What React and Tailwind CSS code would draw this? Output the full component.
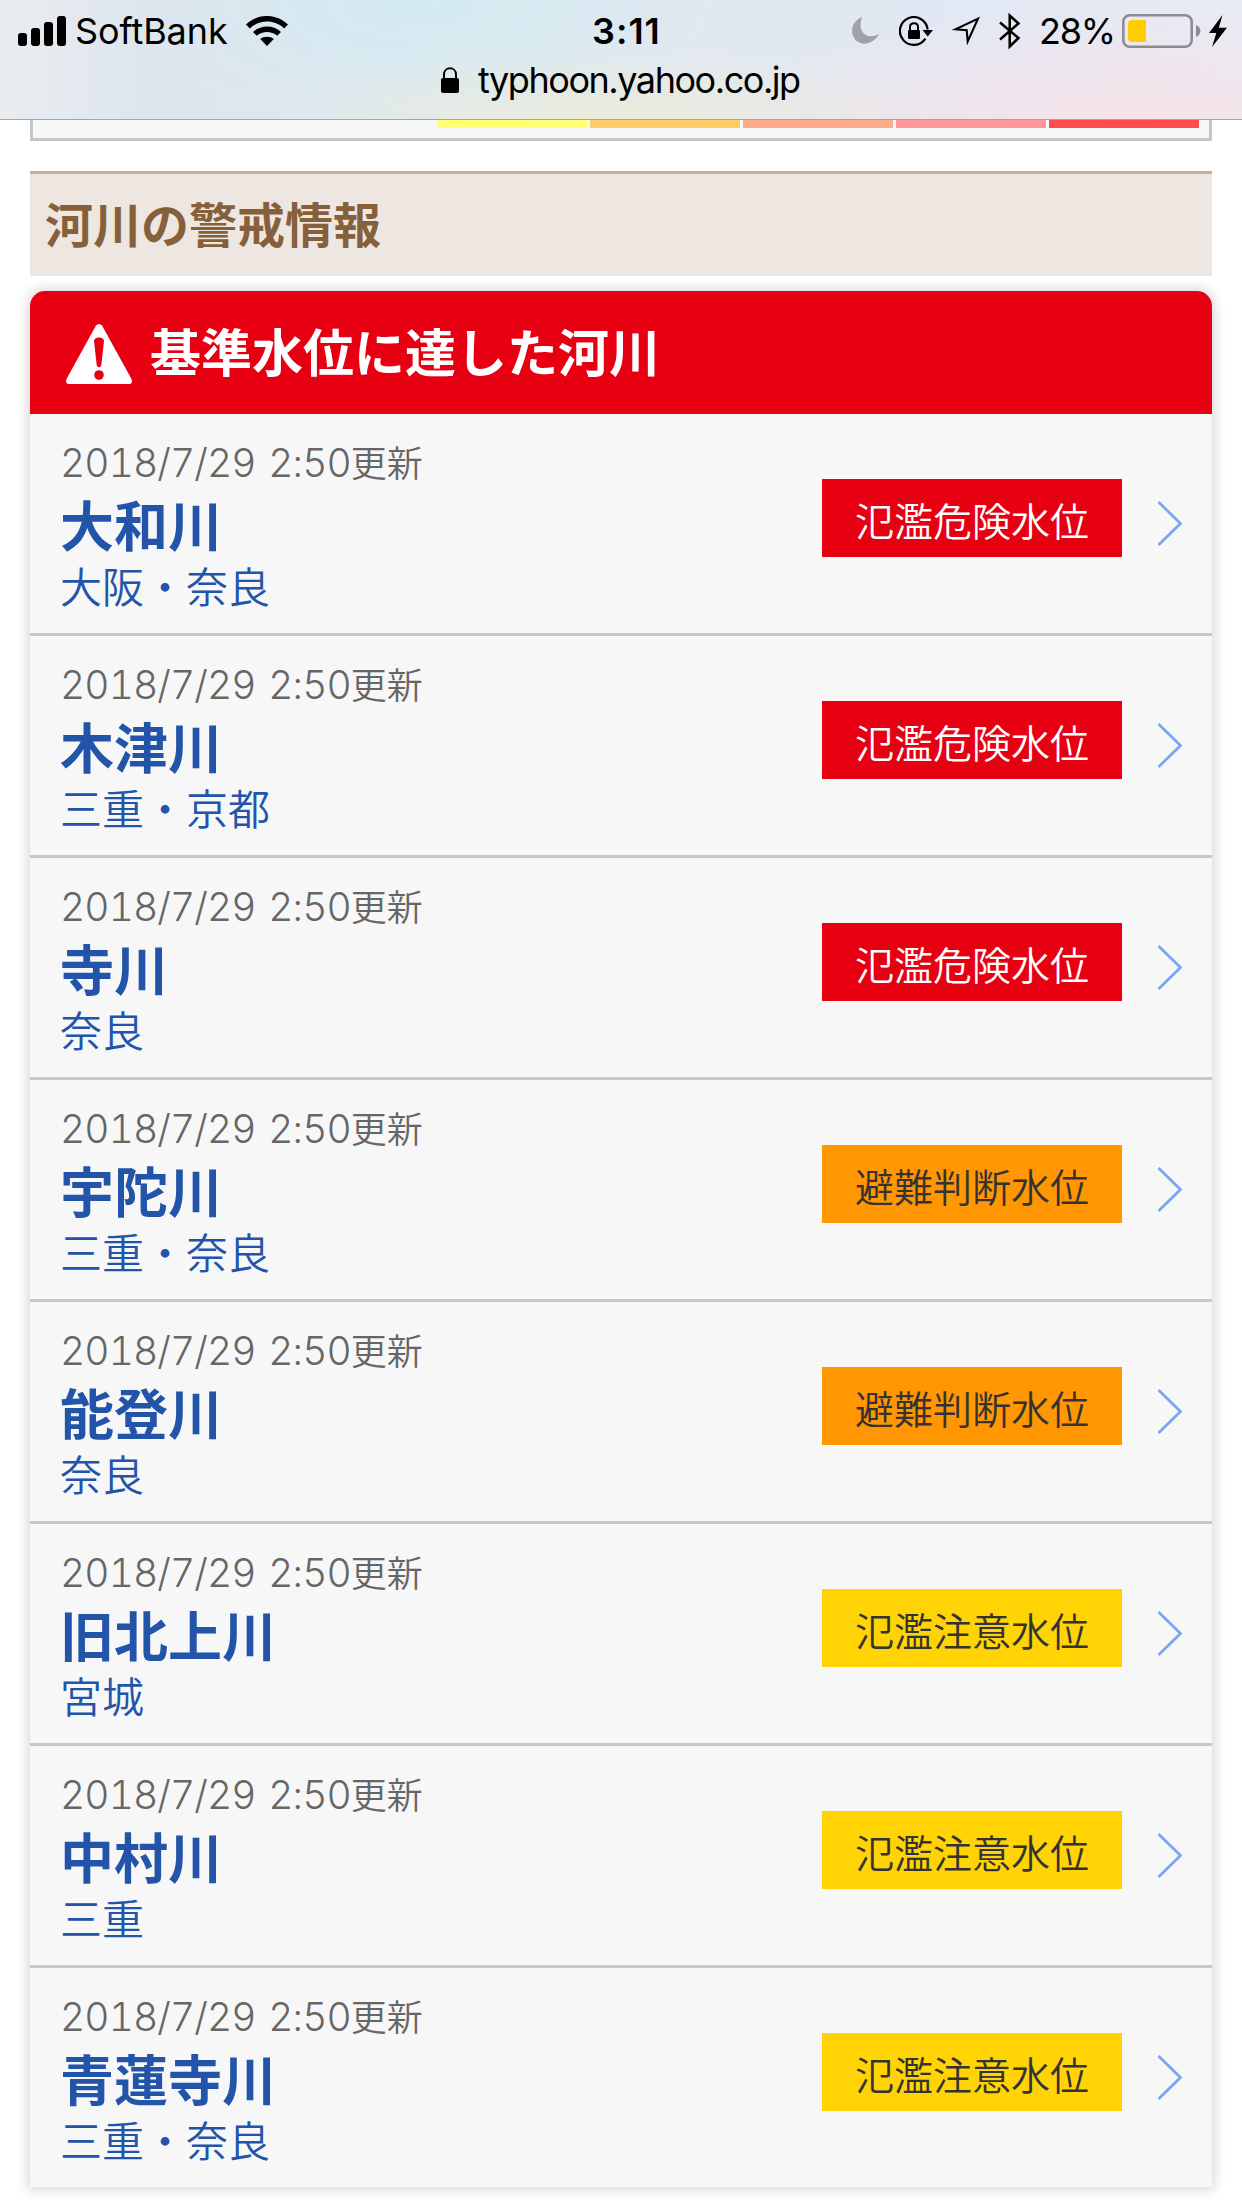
import React from 'react'

const RIVERS = [
  { name: '大和川', area: '大阪・奈良', level: 'danger' },
  { name: '木津川', area: '三重・京都', level: 'danger' },
  { name: '寺川', area: '奈良', level: 'danger' },
  { name: '宇陀川', area: '三重・奈良', level: 'evacuation' },
  { name: '能登川', area: '奈良', level: 'evacuation' },
  { name: '旧北上川', area: '宮城', level: 'caution' },
  { name: '中村川', area: '三重', level: 'caution' },
  { name: '青蓮寺川', area: '三重・奈良', level: 'caution' },
]

const LEVELS = {
  danger: { label: '氾濫危険水位', style: 'bg-[#e60012] text-white' },
  evacuation: { label: '避難判断水位', style: 'bg-[#ff9602] text-[#333]' },
  caution: { label: '氾濫注意水位', style: 'bg-[#ffd304] text-[#333]' },
}

const LEGEND = ['bg-[#ffff71]', 'bg-[#ffcc66]', 'bg-[#ffaa8c]', 'bg-[#ff9799]', 'bg-[#ff4c4c]']

const StatusBar = () => (
  <div className="flex h-[62px] items-center font-['Inter',sans-serif] text-[36px] leading-none text-black whitespace-nowrap">
    <div className="flex w-[592px] items-center pl-[18px]">
      <svg width="48" height="30" viewBox="0 0 48 30" className="shrink-0">
        <rect x="0" y="17" width="9" height="13" rx="3" />
        <rect x="13" y="12" width="9" height="18" rx="3" />
        <rect x="26" y="6" width="9" height="24" rx="3" />
        <rect x="39" y="0" width="9" height="30" rx="3" />
      </svg>
      <span className="ml-[9px] w-[171px] tracking-[-0.1px]">SoftBank</span>
      <svg width="42" height="30" viewBox="0 0 42 30" className="shrink-0">
        <path d="M0 8.6C12-2.9 30-2.9 42 8.6L38.2 12.4C28.5 3.3 13.5 3.3 3.8 12.4Z" />
        <path d="M7 15.9C15 8.7 27 8.7 35 15.9L31.2 19.7C25.4 14.7 16.6 14.7 10.8 19.7Z" />
        <path d="M14.2 23.1C18 20 24 20 27.8 23.1L21 30Z" />
      </svg>
    </div>
    <span className="w-[260px] font-semibold tracking-[1px]">3:11</span>
    <svg width="28" height="28" viewBox="0 0 28 28" className="shrink-0">
      <path d="M10 0C2.5 3-1.2 10 .4 17.1C3.1 28.5 18.5 31.2 27.5 16.8C19 22.5 4 19 10 0Z" fill="#9ea2a9" />
    </svg>
    <svg width="34" height="30" viewBox="0 0 34 30" className="ml-[19px] shrink-0">
      <path d="M26.4 22.6A13.9 13.9 0 1 1 28.6 13.5" fill="none" stroke="#000" strokeWidth="2.2" />
      <path d="M23.5 14H34L28.7 20.5Z" />
      <rect x="9" y="14" width="12" height="9" rx="1.2" />
      <path d="M11 15V11C11 6 19 6 19 11V15" fill="none" stroke="#000" strokeWidth="2" />
    </svg>
    <svg width="30" height="30" viewBox="0 0 30 30" className="ml-[18px] shrink-0">
      <path d="M27 2.6L4.5 13.3L15.7 14.3L16.7 25.5Z" fill="none" stroke="#000" strokeWidth="2.1" />
    </svg>
    <svg width="22" height="38" viewBox="0 0 22 38" className="ml-[18px] shrink-0">
      <path d="M1 10.5L19.5 26L10.7 34.5V3.5L19.5 11.5L1 27.5" fill="none" stroke="#000" strokeWidth="2.5" />
    </svg>
    <span className="ml-[18px] w-[83px] tracking-[-1.3px]">28%</span>
    <svg width="80" height="34" viewBox="0 0 80 34" className="shrink-0">
      <rect x="1.3" y="1.3" width="68.4" height="31.4" rx="6.5" fill="none" stroke="#8c8b92" strokeWidth="2.6" />
      <path d="M10 6H24V28H10Q6 28 6 24V10Q6 6 10 6Z" fill="#ffcc00" />
      <path d="M74 11Q78.5 13.5 78.5 17Q78.5 20.5 74 23Z" fill="#8c8b92" />
    </svg>
    <svg width="18" height="32" viewBox="0 0 18 32" className="ml-[7px] shrink-0">
      <path d="M13.5 0L0 18H7.3L3 32L18 12.8H9.8Z" />
    </svg>
  </div>
)

const AddressBar = () => (
  <div className="flex h-[57px] items-start pl-[441px] font-['Inter',sans-serif] text-[36px] leading-[37px] text-black">
    <svg width="18" height="26" viewBox="0 0 18 26" className="mt-[5px] shrink-0">
      <rect x="0" y="11" width="18" height="15" rx="2" />
      <path d="M3 12V7.5C3-.7 15-.7 15 7.5V12" fill="none" stroke="#000" strokeWidth="2" />
    </svg>
    <span className="ml-[19px] whitespace-nowrap tracking-[-1.45px]">typhoon.yahoo.co.jp</span>
  </div>
)

const RiverRow = ({ river }) => {
  const level = LEVELS[river.level]
  return (
    <li className="flex h-[222px] items-center border-b-[3px] border-[#c8c8c8] px-[30px] last:h-[219px] last:border-b-0">
      <div className="grow self-start pt-5 whitespace-nowrap">
        <p className="h-[54px] text-[36px] leading-[54px] font-[350] text-[#666]">
          <span className="font-['Inter',sans-serif] text-[39px] tracking-[-0.9px] [word-spacing:3px] tabular-nums">2018/7/29 2:50</span>更新
        </p>
        <p className="h-[71px] text-[54px] leading-[71px] font-bold text-[#2255aa]">{river.name}</p>
        <p className="h-[52px] text-[42px] leading-[52px] font-[350] text-[#2255aa]">{river.area}</p>
      </div>
      <span className={`mb-[11px] h-[78px] w-[300px] text-center text-[39px] leading-[80px] font-[350] ${level.style}`}>
        {level.label}
      </span>
      <svg width="24" height="45" viewBox="0 0 24 45" className="ml-9 shrink-0">
        <path d="M.5 1L22.5 22.5L.5 44" fill="none" stroke="#7aa5f0" strokeWidth="2.7" />
      </svg>
    </li>
  )
}

const App = () => {
  return (
    <div className="h-[2208px] w-[1242px] overflow-hidden bg-white font-['Noto_Sans_CJK_JP',sans-serif]">
      {/* Browser header */}
      <header className="h-[120px] border-b border-[#a5a6a8] bg-[radial-gradient(ellipse_420px_110px_at_1130px_120px,#f6e2e8,transparent),radial-gradient(ellipse_360px_80px_at_620px_125px,#ebecda,transparent),radial-gradient(ellipse_300px_130px_at_420px_0px,#d2ebf1,transparent),linear-gradient(to_right,#e9edf0,#dee5ee_12%,#e1e8f0_35%,#e1e8f3_75%,#e8eaf4)]">
        <StatusBar />
        <AddressBar />
      </header>

      <main className="px-[30px]">
        {/* Legend strip */}
        <div className="flex h-[21px] items-start justify-end gap-[3px] border-x-[3px] border-b-[3px] border-[#c5c5c5] bg-[#f7f7f7] pr-[10px]">
          {LEGEND.map((color) => (
            <div key={color} className={`h-2 w-[150px] ${color}`} />
          ))}
        </div>

        <h2 className="mt-[30px] h-[105px] border-t-[3px] border-[#c2b0a0] bg-[#eee6e0] pl-[15px] text-[48px] leading-[97px] font-bold text-[#85603a]">
          河川の警戒情報
        </h2>

        {/* River list */}
        <section className="mt-[15px] rounded-t-[15px] bg-[#f7f7f7] shadow-[0_0_12px_3px_rgba(0,0,0,0.15)]">
          <h3 className="flex h-[123px] items-center rounded-t-[15px] bg-[#e60012] pl-9 text-[51px] font-bold text-white">
            <svg width="66" height="60" viewBox="0 0 66 60" className="mt-[3px] mr-[18px] shrink-0">
              <path d="M30 1.5Q33-1.5 36 1.5L65.5 55Q67 60 63 60H3Q-1 60 .5 55Z" fill="#fff" />
              <path d="M28 17C28 12.3 38 12.3 38 17L35.3 41C35 44 31 44 30.7 41Z" fill="#e60012" />
              <circle cx="33" cy="51" r="4.8" fill="#e60012" />
            </svg>
            <span className="mb-[5px]">基準水位に達した河川</span>
          </h3>
          <ul>
            {RIVERS.map((river) => (
              <RiverRow key={river.name} river={river} />
            ))}
          </ul>
        </section>
      </main>
    </div>
  )
}

export default App
